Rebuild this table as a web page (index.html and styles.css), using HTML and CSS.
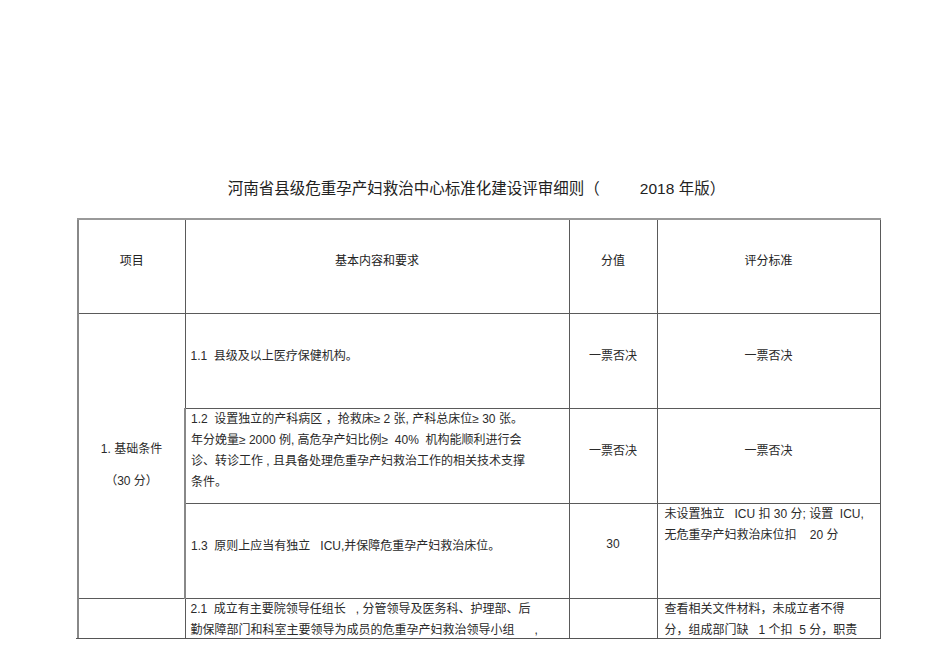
FILE: index.html
```html
<!DOCTYPE html>
<html lang="zh-CN">
<head>
<meta charset="utf-8">
<title>河南省县级危重孕产妇救治中心标准化建设评审细则</title>
<link rel="stylesheet" href="styles.css">
</head>
<body>
<div class="page">
  <h1 class="title">河南省县级危重孕产妇救治中心标准化建设评审细则（<span class="gap"></span>2018 年版）</h1>
  <div class="clip">
  <table class="grid">
    <colgroup>
      <col class="c1"><col class="c2"><col class="c3"><col class="c4">
    </colgroup>
    <tr class="head">
      <th>项目</th>
      <th>基本内容和要求</th>
      <th>分值</th>
      <th>评分标准</th>
    </tr>
    <tr class="row">
      <td rowspan="3" class="item">
        <div>1. 基础条件</div>
        <div class="sub">（30 分）</div>
      </td>
      <td class="left mid">1.1&nbsp; 县级及以上医疗保健机构。</td>
      <td class="center mid">一票否决</td>
      <td class="center mid">一票否决</td>
    </tr>
    <tr class="row">
      <td class="left top">1.2&nbsp; 设置独立的产科病区 ，抢救床≥ 2 张, 产科总床位≥ 30 张。<br>年分娩量≥ 2000 例, 高危孕产妇比例≥&nbsp; 40%&nbsp; 机构能顺利进行会<br>诊、转诊工作 , 且具备处理危重孕产妇救治工作的相关技术支撑<br>条件。</td>
      <td class="center mid">一票否决</td>
      <td class="center mid">一票否决</td>
    </tr>
    <tr class="row">
      <td class="left mid">1.3&nbsp; 原则上应当有独立&nbsp;&nbsp; ICU,并保障危重孕产妇救治床位。</td>
      <td class="center mid">30</td>
      <td class="right top">未设置独立&nbsp;&nbsp; ICU 扣 30 分; 设置&nbsp; ICU,<br>无危重孕产妇救治床位扣&nbsp;&nbsp;&nbsp; 20 分</td>
    </tr>
    <tr class="last">
      <td></td>
      <td class="left top">2.1&nbsp; 成立有主要院领导任组长&nbsp;&nbsp; , 分管领导及医务科、护理部、后<br>勤保障部门和科室主要领导为成员的危重孕产妇救治领导小组&nbsp;&nbsp;&nbsp;&nbsp;&nbsp; ,</td>
      <td></td>
      <td class="right top">查看相关文件材料，未成立者不得<br>分，组成部门缺&nbsp;&nbsp; 1 个扣&nbsp; 5 分，职责</td>
    </tr>
  </table>
  </div>
</div>
</body>
</html>
```

FILE: styles.css
```css
html, body {
  margin: 0;
  padding: 0;
  background: #ffffff;
}

body {
  font-family: "Liberation Sans", "Noto Sans CJK SC", sans-serif;
  color: #2a2a2a;
  width: 950px;
  height: 672px;
  overflow: hidden;
}

.page {
  padding: 179px 0 0 76px;
}

.title {
  margin: 0 0 0 -76px;
  width: 950px;
  text-align: center;
  font-weight: normal;
  font-size: 15.5px;
  line-height: 20px;
  height: 20px;
  color: #222;
  white-space: nowrap;
  text-indent: 3px;
}

.gap {
  display: inline-block;
  width: 40px;
}

.clip {
  margin-top: 19px;
  width: 805px;
  height: 421px;
  overflow: hidden;
  position: relative;
}

.clip::after {
  content: "";
  position: absolute;
  left: 0;
  width: 804px;
  bottom: 0;
  height: 1px;
  background: #555;
}

.grid {
  border-collapse: collapse;
  table-layout: fixed;
  width: 803px;
  font-size: 12px;
  margin-left: 1px;
}

.c1 { width: 107px; }
.c2 { width: 384px; }
.c3 { width: 88px; }
.c4 { width: 223px; }

.grid th,
.grid td {
  border: 1px solid #5a5a5a;
  padding: 0;
  white-space: nowrap;
  overflow: hidden;
}

.grid tr:first-child th {
  border-top: 2px solid #999;
}

.grid th:first-child,
.grid td:first-child {
  border-left: 2px solid #888;
}

.head th {
  height: 79px;
  padding-bottom: 14px;
  font-weight: normal;
  text-align: center;
  vertical-align: middle;
  color: #222;
}

.row td {
  height: 94px;
}

.mid {
  vertical-align: middle;
  padding-bottom: 14px !important;
  height: 80px !important;
}

.top {
  vertical-align: top;
  line-height: 21px;
}

.left {
  text-align: left;
  padding-left: 5px !important;
}

.right {
  text-align: left;
  padding-left: 7px !important;
}

.center {
  text-align: center;
}

.item {
  text-align: center;
  vertical-align: top;
  padding-top: 126px !important;
  line-height: 18px;
}

.item .sub {
  margin-top: 14px;
}

.last td {
  height: 60px;
  vertical-align: top;
}

.last .top {
  line-height: 21px;
  padding-top: 0;
}
```
